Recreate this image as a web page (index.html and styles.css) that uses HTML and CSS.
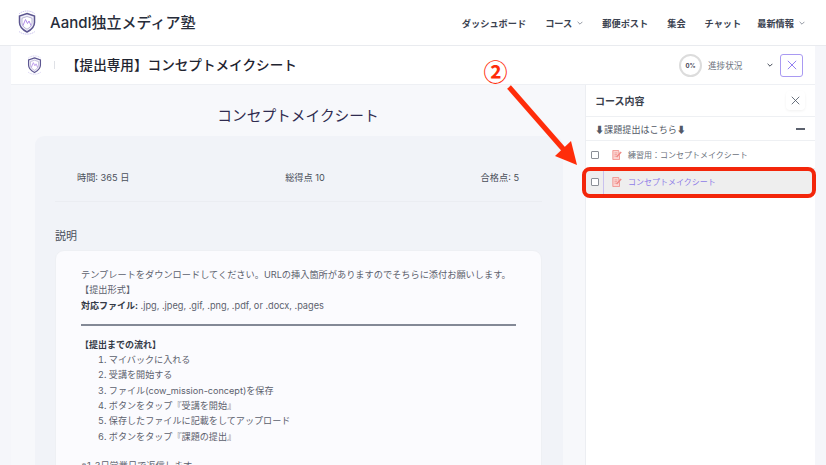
FILE: index.html
```html
<!DOCTYPE html>
<html lang="ja">
<head>
<meta charset="utf-8">
<title>コンセプトメイクシート</title>
<link rel="stylesheet" href="styles.css">
</head>
<body>
<header class="topbar">
  <div class="brand">
    <svg class="logo" viewBox="0 0 24 26"><use href="#shield"/></svg>
    <span class="brand-name">AandI独立メディア塾</span>
  </div>
  <nav class="nav">
    <span>ダッシュボード</span>
    <span class="has-caret">コース <svg class="caret" viewBox="0 0 10 6"><path d="M1 1l4 4 4-4"/></svg></span>
    <span>郵便ポスト</span>
    <span>集会</span>
    <span>チャット</span>
    <span class="has-caret nav-last">最新情報 <svg class="caret" viewBox="0 0 10 6"><path d="M1 1l4 4 4-4"/></svg></span>
  </nav>
</header>
<div class="stage">
  <div class="subbar">
    <svg class="logo-small" viewBox="0 0 24 26"><use href="#shield"/></svg>
    <span class="divider"></span>
    <h1 class="course-title">【提出専用】コンセプトメイクシート</h1>
    <div class="progress-ring">0%</div>
    <span class="progress-label">進捗状況</span>
    <svg class="progress-caret" viewBox="0 0 10 6"><path d="M1 1l4 4 4-4"/></svg>
    <button class="close-btn"><svg viewBox="0 0 12 12"><path d="M1 1l10 10M11 1L1 11"/></svg></button>
  </div>
  <div class="columns">
    <main class="main">
      <h2 class="quiz-title">コンセプトメイクシート</h2>
      <section class="card">
        <div class="meta">
          <span>時間: 365 日</span>
          <span>総得点 10</span>
          <span>合格点: 5</span>
        </div>
        <h3 class="desc-label">説明</h3>
        <div class="desc">
          <p>テンプレートをダウンロードしてください。URLの挿入箇所がありますのでそちらに添付お願いします。</p>
          <p class="indent">【提出形式】</p>
          <p><b>対応ファイル:</b> .jpg, .jpeg, .gif, .png, .pdf, or .docx, .pages</p>
          <hr class="rule">
          <p class="indent"><b>【提出までの流れ】</b></p>
          <ol class="steps">
            <li>マイバックに入れる</li>
            <li>受講を開始する</li>
            <li>ファイル(cow_mission-concept)を保存</li>
            <li>ボタンをタップ『受講を開始』</li>
            <li>保存したファイルに記載をしてアップロード</li>
            <li>ボタンをタップ『課題の提出』</li>
          </ol>
          <p class="note">※1-3日営業日で返信します。</p>
        </div>
      </section>
    </main>
    <aside class="side">
      <div class="side-head">
        <span>コース内容</span>
        <span class="side-close"><svg class="side-x" viewBox="0 0 12 12"><path d="M1 1l10 10M11 1L1 11"/></svg></span>
      </div>
      <div class="section-head">
        <span>⬇課題提出はこちら⬇</span>
        <span class="minus"></span>
      </div>
      <div class="lesson">
        <span class="check"></span>
        <svg class="lesson-icon" viewBox="0 0 12 12"><use href="#edit"/></svg>
        <span>練習用：コンセプトメイクシート</span>
      </div>
      <div class="lesson active">
        <span class="check"></span>
        <svg class="lesson-icon" viewBox="0 0 12 12"><use href="#edit"/></svg>
        <span>コンセプトメイクシート</span>
      </div>
    </aside>
  </div>
</div>

<div class="annot-num">②</div>
<svg class="annot-arrow" viewBox="0 0 826 465">
  <path d="M509 87L565 151" stroke="#ff2d0a" stroke-width="5" fill="none"/>
  <path d="M577 165L555 156 571 141z" fill="#ff2d0a"/>
</svg>
<div class="annot-box"></div>

<svg class="defs" width="0" height="0">
  <defs>
    <g id="shield">
      <path d="M4 4.500C8 .5 16 .5 20 4.500M4 22C8 25.500 16 25.500 20 22" fill="none" stroke="#c9c2ee" stroke-width=".9" stroke-dasharray="1.500 .7"/>
      <path d="M12 4l7.500 2.500v6.500c0 4.500-3.500 7.500-7.500 9.500-4-2-7.500-5-7.500-9.500V6.500z" fill="#f1effa" stroke="#5c5690" stroke-width="1.500"/>
      <path d="M12 7l5 1.700v4.500c0 3-2.300 5-5 6.500-2.700-1.500-5-3.500-5-6.500V8.700z" fill="#fff" stroke="#8f89b8" stroke-width=".6"/>
      <path d="M8 16l2.500-6 2 4 1.500-2.500 2 4.500" fill="none" stroke="#b28ce8" stroke-width="1"/>
    </g>
    <g id="edit" stroke="#ef8a86">
      <path d="M9 7v4.500H1V.5H8z" fill="#fbd5d2" stroke-width="1"/>
      <path d="M3 3.500h3.500M3 5.500h3M3 7.500h2.500" fill="none" stroke-width=".8"/>
      <path d="M5.500 8.500L11 2.500" fill="none" stroke-width="1.800"/>
    </g>
  </defs>
</svg>
</body>
</html>
```
FILE: styles.css
```css
* { box-sizing: border-box; }
html, body { margin: 0; height: 465px; overflow: hidden; }
body {
  position: relative;
  background: #f5f6fa;
  font-family: Inter, "Noto Sans CJK JP", sans-serif;
  color: #3d4452;
}
.topbar {
  height: 46px;
  background: #fff;
  border-bottom: 1px solid #e9ebef;
  display: flex;
  align-items: center;
  justify-content: space-between;
  padding: 0 21px 0 15px;
}
.brand { display: flex; align-items: center; gap: 11px; }
.logo { width: 24px; height: 27px; }
.brand-name { font-size: 15px; font-weight: 500; color: #272d3a; line-height: 20px; }
.nav {
  display: flex;
  gap: 19px;
  font-size: 9.200px;
  font-weight: 700;
  color: #3b4250;
}
.nav-last { margin-left: -3px; }
.has-caret { display: inline-flex; align-items: center; gap: 5px; }
.caret { width: 6px; height: 4px; fill: none; stroke: #6b7280; stroke-width: 1.200; }
.stage { padding: 0 11px; }
.subbar {
  height: 39px;
  background: #fff;
  display: flex;
  align-items: center;
  padding: 0 12px 0 14px;
  border-bottom: 1px solid #eef0f4;
}
.logo-small { width: 19px; height: 22px; }
.divider { width: 1px; height: 8px; background: #dfe1e6; margin: 0 11px 0 10px; }
.course-title {
  flex: 1;
  margin: 0;
  font-size: 13.600px;
  font-weight: 500;
  color: #1f2430;
  letter-spacing: 0;
  line-height: 20px;
  margin-top: -1px;
}
.progress-ring {
  width: 23px;
  height: 23px;
  border: 2px solid #dcdcdc;
  border-radius: 50%;
  font-size: 6px;
  font-weight: 700;
  display: flex;
  align-items: center;
  justify-content: center;
  color: #3d4452;
}
.progress-label { font-size: 8.600px; color: #6e7480; margin-left: 6px; width: 59px; }
.progress-caret { width: 6px; height: 4px; fill: none; stroke: #3d4452; stroke-width: 1.600; margin-right: 7px; }
.close-btn {
  width: 23px;
  height: 23px;
  padding: 0;
  background: #fff;
  border: 1px solid #a99af2;
  border-radius: 3px;
  display: flex;
  align-items: center;
  justify-content: center;
}
.close-btn svg { width: 10px; height: 10px; fill: none; stroke: #7c68ee; stroke-width: 1; }
.columns { display: flex; }
.main { width: 574px; height: 380px; background: #f7f8fb; overflow: hidden; }
.quiz-title {
  margin: 0;
  padding-top: 21px;
  text-align: center;
  font-size: 14.700px;
  line-height: 20px;
  font-weight: 400;
  color: #2f2b4f;
}
.card {
  margin: 10px 22px 0 24px;
  height: 340px;
  background: #f1f3f8;
  border-radius: 9px;
  padding: 0 21px 0 20px;
}
.meta {
  height: 66px;
  display: flex;
  justify-content: space-between;
  align-items: center;
  padding: 30px 23px 14px 22px;
  font-size: 9.200px;
  color: #4a4f5a;
  border-bottom: 1px solid #ebedf2;
}
.desc-label { margin: 27px 0 6px; font-size: 11px; line-height: 15px; font-weight: 400; color: #4a4f5a; }
.desc {
  background: #fbfbfe;
  border: 1px solid #eef0f4;
  border-radius: 9px;
  padding: 16px 25px 0 25px;
  font-size: 9.200px;
  line-height: 15.300px;
  color: #5b616d;
  height: 240px;
}
.desc p { margin: 0; }
.desc b { color: #343a46; font-weight: 700; font-size: 9px; }
.indent { text-indent: -1px; }
.rule { border: 0; height: 2px; background: #838996; margin: 11px 0 11px; }
.steps { margin: 0; padding: 0 0 0 17px; list-style-position: inside; font-size: 9.100px; }
.note { margin-top: 14px !important; }
.side { width: 230px; height: 380px; background: #fff; border-left: 1px solid #eceef2; }
.side-head {
  height: 32px;
  display: flex;
  align-items: center;
  justify-content: space-between;
  padding: 0 10px 0 9px;
  font-size: 10px;
  font-weight: 700;
  color: #3a404c;
  border-bottom: 1px solid #eef0f3;
}
.side-close {
  width: 19px;
  height: 19px;
  display: flex;
  align-items: center;
  justify-content: center;
  border-radius: 4px;
  box-shadow: 0 1px 3px rgba(0, 0, 0, .06);
}
.side-x { width: 9px; height: 9px; fill: none; stroke: #4b5563; stroke-width: 1.100; }
.section-head {
  height: 24px;
  display: flex;
  align-items: center;
  justify-content: space-between;
  padding: 0 10px 0 9px;
  font-size: 9.100px;
  color: #535966;
  border-bottom: 1px solid #eef0f3;
}
.minus { width: 9px; height: 2px; background: #5b616d; }
.lesson {
  height: 27px;
  display: flex;
  align-items: center;
  padding-left: 5px;
  font-size: 8px;
  color: #6b717c;
}
.check { width: 8px; height: 8px; border: 1px solid #8b8f96; border-radius: 1px; background: #fff; margin-right: 13px; }
.lesson-icon { width: 10px; height: 10px; margin-right: 6px; }
.lesson.active { background: #eeeeee; color: #8f7ce8; position: relative; }
.lesson.active::before { content: ""; position: absolute; left: 17px; top: 0; bottom: 0; width: 1px; background: #c9c2ee; }
.annot-num {
  position: absolute;
  left: 483px;
  top: 58px;
  width: 25px;
  text-align: center;
  font-family: "Noto Sans CJK JP", sans-serif;
  font-size: 24px;
  line-height: 26px;
  font-weight: 700;
  color: #ff2d0a;
}
.annot-arrow { position: absolute; left: 0; top: 0; width: 826px; height: 465px; pointer-events: none; }
.annot-box {
  position: absolute;
  left: 582px;
  top: 167px;
  width: 234px;
  height: 31px;
  border: 4px solid #f3260a;
  border-radius: 8px;
}
.defs { position: absolute; }
```
